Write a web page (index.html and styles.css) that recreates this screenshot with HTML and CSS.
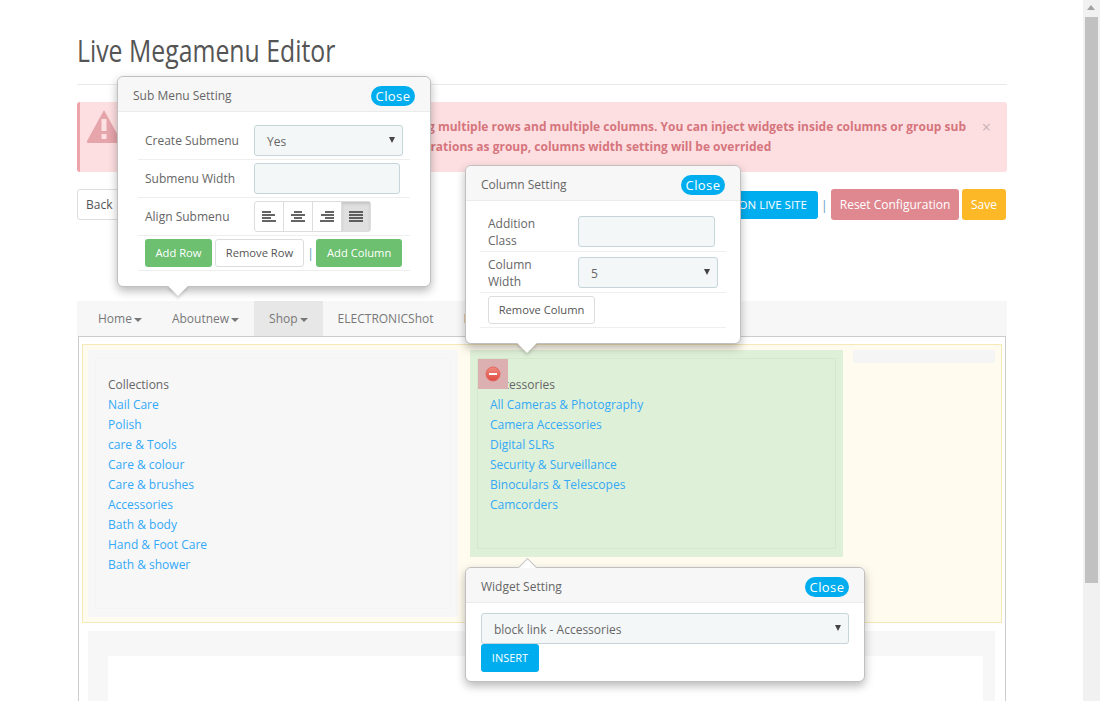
FILE: index.html
```html
<!DOCTYPE html>
<html lang="en">
<head>
<meta charset="utf-8">
<title>Live Megamenu Editor</title>
<link rel="stylesheet" href="styles.css">
</head>
<body>
<div class="shell">
  <main class="page">
    <h1 class="title"><span class="title-text">Live Megamenu Editor</span></h1>
    <div class="alert">
      <svg class="alert-icon" viewBox="0 0 36 34" width="36" height="34"><path d="M18 1 L35 32 Q35.500 34 33 34 L3 34 Q.5 34 1 32 Z" fill="#e5a5ab"/><rect x="15.500" y="10" width="5" height="12" fill="#fde0e2"/><rect x="15.500" y="25" width="5" height="5" fill="#fde0e2"/></svg>
      <p class="alert-text">This tool allows you to build menus by using multiple rows and multiple columns. You can inject widgets inside columns or group sub<br>menu in column. When using group configurations as group, columns width setting will be overrided</p>
      <span class="alert-close">×</span>
    </div>
    <div class="toolbar">
      <button class="btn btn-back">Back</button>
      <div class="toolbar-right">
        <button class="btn btn-live">VIEW ON LIVE SITE</button>
        <span class="sep">|</span>
        <button class="btn btn-reset">Reset Configuration</button>
        <button class="btn btn-save">Save</button>
      </div>
    </div>
    <nav class="nav">
      <a class="nav-item">Home<i class="caret"></i></a>
      <a class="nav-item">Aboutnew<i class="caret"></i></a>
      <a class="nav-item active">Shop<i class="caret"></i></a>
      <a class="nav-item">ELECTRONICShot</a>
      <a class="nav-item">Electronics</a>
    </nav>
    <section class="editor">
      <div class="mega-row">
        <div class="col col-a">
          <div class="col-inner">
            <div class="head">Collections</div>
            <a class="lnk">Nail Care</a>
            <a class="lnk">Polish</a>
            <a class="lnk">care &amp; Tools</a>
            <a class="lnk">Care &amp; colour</a>
            <a class="lnk">Care &amp; brushes</a>
            <a class="lnk">Accessories</a>
            <a class="lnk">Bath &amp; body</a>
            <a class="lnk">Hand &amp; Foot Care</a>
            <a class="lnk">Bath &amp; shower</a>
          </div>
        </div>
        <div class="col col-b">
          <div class="col-inner">
            <div class="head">Accessories</div>
            <a class="lnk">All Cameras &amp; Photography</a>
            <a class="lnk">Camera Accessories</a>
            <a class="lnk">Digital SLRs</a>
            <a class="lnk">Security &amp; Surveillance</a>
            <a class="lnk">Binoculars &amp; Telescopes</a>
            <a class="lnk">Camcorders</a>
          </div>
          <span class="remove-box"><svg viewBox="0 0 16 16" width="16" height="16"><defs><linearGradient id="rg" x1="0" y1="0" x2="0" y2="1"><stop offset="0" stop-color="#f08a80"/><stop offset="1" stop-color="#e04a40"/></linearGradient></defs><circle cx="8" cy="8" r="7" fill="url(#rg)" stroke="#e2685e"/><rect x="4" y="7" width="8" height="2" fill="#fff"/></svg></span>
        </div>
        <div class="col col-c"></div>
      </div>
      <div class="mega-row-2"><div class="white-area"></div></div>
    </section>

    <aside class="pop pop-sub">
      <header class="pop-head"><span class="pop-title">Sub Menu Setting</span><button class="close">Close</button></header>
      <div class="pop-body">
        <div class="frow"><label class="lbl lbl-sub">Create Submenu</label><div class="field field-sel sub-sel">Yes<i class="arrow"></i></div></div>
        <div class="frow"><label class="lbl lbl-sub">Submenu Width</label><div class="field sub-input"></div></div>
        <div class="frow"><label class="lbl lbl-sub">Align Submenu</label>
          <div class="align-group">
            <span class="align"><svg viewBox="0 0 14 12" width="14" height="12"><path d="M0 1h9M0 4h13M0 7h9M0 10h14" stroke="#333" stroke-width="1.300"/></svg></span>
            <span class="align"><svg viewBox="0 0 14 12" width="14" height="12"><path d="M3 1h8M0 4h14M3 7h8M0 10h14" stroke="#333" stroke-width="1.300"/></svg></span>
            <span class="align"><svg viewBox="0 0 14 12" width="14" height="12"><path d="M5 1h9M1 4h13M5 7h9M0 10h14" stroke="#333" stroke-width="1.300"/></svg></span>
            <span class="align on"><svg viewBox="0 0 14 12" width="14" height="12"><path d="M0 1h14M0 4h14M0 7h14M0 10h14" stroke="#333" stroke-width="1.300"/></svg></span>
          </div>
        </div>
        <div class="frow frow-btn"><button class="btn btn-green btn-addrow">Add Row</button><button class="btn btn-plain btn-remrow">Remove Row</button><span class="sep sep-pop">|</span><button class="btn btn-green btn-addcol">Add Column</button></div>
      </div>
    </aside>

    <aside class="pop pop-col">
      <header class="pop-head"><span class="pop-title">Column Setting</span><button class="close">Close</button></header>
      <div class="pop-body">
        <div class="frow frow-col"><label class="lbl lbl-col">Addition Class</label><div class="field col-input"></div></div>
        <div class="frow frow-col"><label class="lbl lbl-col">Column Width</label><div class="field field-sel col-sel">5<i class="arrow"></i></div></div>
        <div class="frow frow-btn frow-col"><button class="btn btn-plain btn-remcol">Remove Column</button></div>
      </div>
    </aside>

    <aside class="pop pop-wid">
      <header class="pop-head"><span class="pop-title">Widget Setting</span><button class="close">Close</button></header>
      <div class="wid-body">
        <div class="field field-sel wid-sel">block link - Accessories<i class="arrow"></i></div>
        <button class="btn btn-insert">INSERT</button>
      </div>
    </aside>
  </main>
  <div class="scrollbar"><i class="sb-up"></i><div class="sb-thumb"></div></div>
</div>
</body>
</html>
```
FILE: styles.css
```css
* { box-sizing: border-box; }
html, body { margin: 0; height: 701px; overflow: hidden; background: #fff; }
body { font: 13px/20px "Open Sans", sans-serif; color: #666; }
.shell { display: flex; height: 701px; overflow: hidden; }
.page { position: relative; flex: 1; padding: 0 76px 0 77px; min-width: 0; }
.title { margin: 0; padding-top: 31px; height: 85px; border-bottom: 1px solid #e8e8e8; font: 400 31px/38px "Open Sans", sans-serif; color: #555; }
.title-text { display: inline-block; transform: scaleX(.8); transform-origin: left center; white-space: nowrap; }
.alert { position: relative; display: flex; margin-top: 17px; height: 70px; background: #fedfe1; border-left: 3px solid #eda4aa; border-radius: 3px; }
.alert-icon { margin: 7px 0 0 6px; flex: none; }
.alert-text { margin: 15px 0 0 49px; font-size: 12px; font-weight: 700; line-height: 20px; color: #d5757d; white-space: nowrap; }
.alert-close { position: absolute; right: 16px; top: 15px; font-size: 16px; line-height: 20px; color: #c9b3b5; }
.toolbar { display: flex; justify-content: space-between; align-items: center; margin-top: 17px; height: 31px; }
.toolbar-right { display: flex; align-items: center; margin-right: 1px; }
.btn { font: 12px/18px "Open Sans", sans-serif; border: 1px solid transparent; border-radius: 3px; padding: 4px 12px; }
.btn-back { background: #fff; border-color: #ddd; color: #555; height: 31px; width: 60px; padding: 0 8px; text-align: left; }
.btn-live { background: #00aeef; color: #fff; height: 28px; width: 134px; font-size: 11.500px; padding: 0 10px; text-align: right; white-space: nowrap; }
.sep { color: #6aa0c0; margin: 0 3px; font-size: 13px; }
.btn-reset { background: #e0888f; color: #fff; height: 31px; width: 128px; padding: 0; }
.btn-save { background: #fdb827; color: #fff; height: 31px; width: 44px; margin-left: 3px; padding: 0; }
.nav { display: flex; margin-top: 81px; height: 35px; padding-left: 6px; background: #f7f7f7; font-size: 12px; color: #777; }
.nav-item { display: flex; align-items: center; padding: 0 15px; white-space: nowrap; }
.nav-item.active { background: #e7e7e7; }
.caret { display: inline-block; margin-left: 2px; margin-top: 2px; border: 4px solid transparent; border-top-color: #777; border-bottom: 0; }
.editor { margin: 0 1px; height: 400px; padding: 7px 3px 0 3px; border: 1px solid #ccc; border-bottom: 0; }
.mega-row { display: flex; height: 279px; padding: 5px 6px 5px 5px; background: #fffbee; border: 1px solid #f5e9b8; }
.col { position: relative; flex: none; }
.col-a { width: 370px; padding: 8px 7px; background: #f7f7f7; }
.col-b { width: 373px; height: 207px; margin-left: 12px; padding: 8px 7px; background: #dff0d8; }
.col-c { width: 142px; height: 13px; margin-left: 10px; background: #f5f5f5; }
.col-inner { padding: 16px 12px 33px; border: 1px solid #f4f4f4; }
.col-b .col-inner { border-color: #d5e8cb; }
.head { height: 20px; color: #666; font-size: 12px; }
.lnk { display: block; height: 20px; color: #33a9f7; font-size: 12px; }
.remove-box { position: absolute; left: 8px; top: 9px; display: flex; align-items: center; justify-content: center; width: 30px; height: 30px; background: #dcb0b0; }
.mega-row-2 { height: 200px; margin: 8px 7px 0 6px; padding: 25px 12px 0 20px; background: #f8f7f7; }
.white-area { height: 100%; background: #fff; }
.pop { position: absolute; z-index: 1; background: #fff; border: 1px solid #c0c0c0; border-radius: 6px; box-shadow: 0 4px 10px rgba(0,0,0,.28); color: #666; }
.pop::after { content: ""; position: absolute; z-index: -1; width: 14px; height: 14px; background: #fff; transform: rotate(45deg); }
.pop-sub { left: 117px; top: 76px; width: 314px; height: 211px; }
.pop-sub::after { left: 53px; bottom: -7px; box-shadow: 2px 2px 3px rgba(0,0,0,.15); }
.pop-col { left: 465px; top: 165px; width: 276px; height: 179px; }
.pop-col::after { left: 54px; bottom: -7px; box-shadow: 2px 2px 3px rgba(0,0,0,.15); }
.pop-wid { left: 465px; top: 567px; width: 400px; height: 115px; }
.pop-wid::after { left: 54px; top: -7px; border-left: 1px solid #c0c0c0; border-top: 1px solid #c0c0c0; }
.pop-head { display: flex; justify-content: space-between; align-items: center; height: 35px; padding: 0 15px; background: #f7f7f7; border-bottom: 1px solid #ebebeb; border-radius: 6px 6px 0 0; font-size: 12px; }
.pop-title { margin-top: 3px; }
.close { width: 44px; height: 20px; margin-top: 3px; padding: 0; border: 0; border-radius: 10px; background: #00aeef; color: #fff; font: 13px/20px "Open Sans", sans-serif; letter-spacing: .4px; }
.pop-body { padding: 10px 20px 0; }
.frow { display: flex; align-items: center; min-height: 38px; padding: 0 0 0 7px; border-bottom: 1px solid #eee; }
.frow-btn { min-height: 35px; }
.lbl { display: block; flex: none; font-size: 12px; }
.lbl-sub { width: 109px; }
.field { position: relative; height: 31px; background: #f4f7f8; border: 1px solid #c5d5d9; border-radius: 3px; font-size: 12px; line-height: 31px; }
.field-sel { padding-left: 12px; }
.arrow { position: absolute; right: 7px; top: 11px; border: 3px solid transparent; border-top: 6px solid #444; border-bottom: 0; }
.sub-sel { width: 149px; }
.sub-input { width: 146px; }
.align-group { display: flex; width: 117px; height: 31px; border: 1px solid #ddd; border-radius: 3px; }
.align { display: flex; flex: 1; align-items: center; justify-content: center; border-left: 1px solid #ddd; }
.align:first-child { border-left: 0; }
.align.on { background: #e0e0e0; box-shadow: inset 0 2px 3px rgba(0,0,0,.12); }
.btn-green { background: #6cc070; color: #fff; height: 28px; padding: 0; font-size: 11.200px; }
.btn-plain { background: #fff; border-color: #ddd; color: #555; height: 28px; padding: 0; font-size: 11.200px; }
.btn-addrow { width: 67px; }
.btn-remrow { width: 89px; margin-left: 3px; }
.sep-pop { margin: 0 2px 0 3px; }
.btn-addcol { width: 86px; }
.pop-col .pop-body { padding: 10px 14px 0; }
.frow-col { padding-left: 8px; min-height: 41px; }
.frow-btn.frow-col { min-height: 35px; }
.lbl-col { width: 90px; margin-top: 2px; padding-right: 30px; line-height: 17px; }
.col-input { width: 137px; }
.col-sel { width: 140px; }
.btn-remcol { width: 107px; }
.wid-body { padding: 10px 15px 0; }
.wid-sel { width: 368px; }
.btn-insert { display: block; width: 58px; height: 28px; padding: 0; background: #00aeef; color: #fff; font-size: 11px; }
.scrollbar { position: relative; flex: none; width: 17px; background: #f1f1f1; }
.sb-up { position: absolute; left: 4px; top: 5px; border: 4.500px solid transparent; border-bottom: 5px solid #a3a3a3; border-top: 0; }
.sb-thumb { margin: 17px 2px 0; height: 566px; background: #c1c1c1; }
```
